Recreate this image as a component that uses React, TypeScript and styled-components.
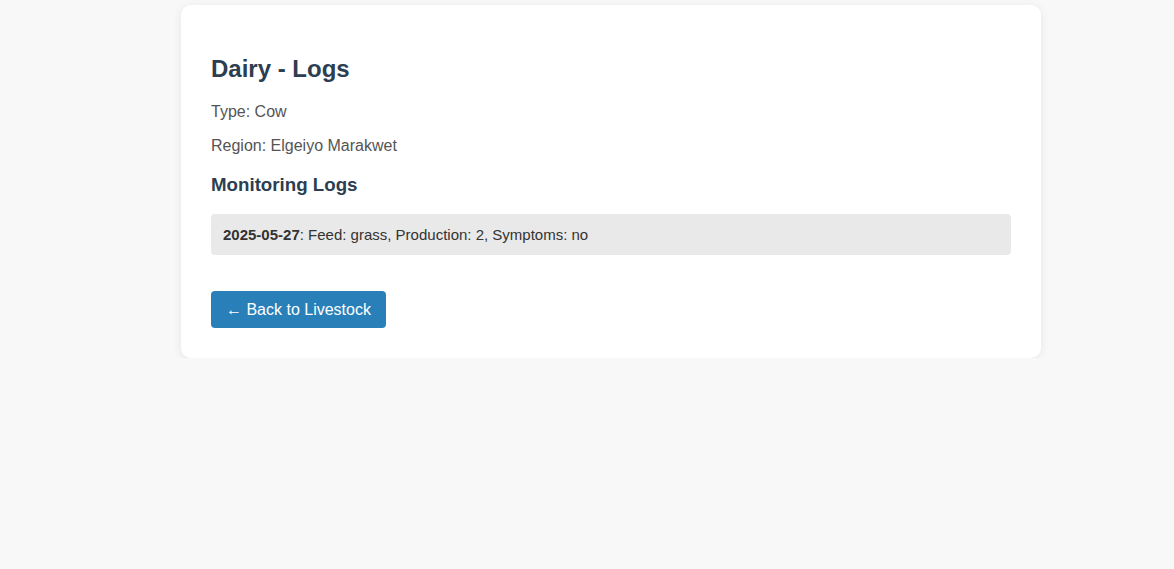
import React from "react";
import styled, { createGlobalStyle } from "styled-components";

const Global = createGlobalStyle`
  html, body { margin: 0; padding: 0; background: #f8f8f8; }
  body { font-family: "Liberation Sans", Arial, sans-serif; }
`;

const Page = styled.div`
  padding: 5px 0 0 48px;
`;

const Card = styled.div`
  width: 800px;
  margin: 0 auto;
  padding: 30px;
  background: #ffffff;
  border-radius: 10px;
  box-shadow: 0 2px 10px rgba(0, 0, 0, 0.08);
`;

const Title = styled.h2`
  margin: 20px 0 20px;
  font-size: 24px;
  line-height: 27.6px;
  font-weight: bold;
  color: #2c3e50;
`;

const Info = styled.p`
  margin: 0 0 16px;
  font-size: 16px;
  line-height: 18.4px;
  color: #555555;
`;

const Subtitle = styled.h3`
  margin: 18.7px 0 18.7px;
  font-size: 18.72px;
  line-height: 21.5px;
  font-weight: bold;
  color: #2c3e50;
`;

const LogList = styled.ul`
  list-style: none;
  margin: 0 0 36.5px;
  padding: 0;
`;

const LogItem = styled.li`
  background: #e9e9e9;
  border-radius: 4px;
  padding: 11.5px 12px;
  font-size: 15px;
  line-height: 17.25px;
  color: #333333;
  & + & { margin-top: 8px; }
`;

const BackButton = styled.a`
  display: inline-block;
  background: #2980b9;
  color: #ffffff;
  text-decoration: none;
  font-size: 16px;
  line-height: 18px;
  padding: 9.5px 15px;
  border-radius: 4px;
`;

export default function App() {
  return (
    <>
      <Global />
      <Page>
        <Card>
          <Title>Dairy - Logs</Title>
          <Info>Type: Cow</Info>
          <Info>Region: Elgeiyo Marakwet</Info>
          <Subtitle>Monitoring Logs</Subtitle>
          <LogList>
            <LogItem>
              <strong>2025-05-27</strong>: Feed: grass, Production: 2, Symptoms: no
            </LogItem>
          </LogList>
          <BackButton href="#">← Back to Livestock</BackButton>
        </Card>
      </Page>
    </>
  );
}
